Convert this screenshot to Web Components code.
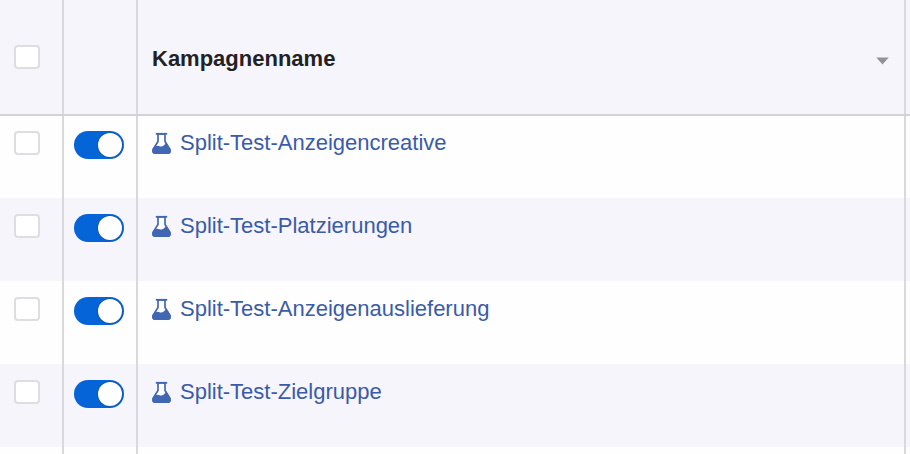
<!DOCTYPE html>
<html lang="de">
<head>
<meta charset="utf-8">
<meta name="viewport" content="width=device-width, initial-scale=1">
<title>Kampagnen</title>
<style>
  html, body { margin: 0; height: 100%; }
  body { background: #fefefe; font-family: "Liberation Sans", Arial, sans-serif; }
</style>
</head>
<body>
<campaign-table></campaign-table>

<script>
class BaseElement extends HTMLElement {
  constructor() {
    super();
    this.attachShadow({ mode: "open" });
  }
  connectedCallback() {
    this.shadowRoot.innerHTML = this.render();
  }
}

class RowCheck extends BaseElement {
  render() {
    return `<style>
      :host { display: block; }
      input {
        appearance: none; display: block; box-sizing: border-box;
        width: 26px; height: 24px; margin: 0 0 0 14px;
        border: 2px solid #dedde2; border-radius: 4px; background: #fff;
      }
      input:checked { background: #0565d8; }
    </style>
    <input type="checkbox" aria-label="${this.getAttribute("label")}">`;
  }
}

class ToggleSwitch extends BaseElement {
  render() {
    return `<style>
      :host { display: block; }
      input {
        appearance: none; display: flex; align-items: center; box-sizing: border-box;
        width: 50px; height: 28px; padding: 0 2px; margin: 0 0 0 10px;
        border-radius: 14px; background: #9a9aa2;
      }
      input::before {
        content: ""; width: 24px; height: 24px; border-radius: 50%;
        background: #fff; box-shadow: 0 0 2px rgba(60, 40, 40, .6);
      }
      input:checked { background: #0565d8; justify-content: flex-end; }
    </style>
    <input type="checkbox" role="switch" checked aria-label="${this.getAttribute("label")}">`;
  }
}

class FlaskIcon extends BaseElement {
  render() {
    return `<style>
      :host { display: block; width: 19px; height: 22px; flex: none; }
      svg { display: block; }
    </style>
    <svg width="19" height="22" viewBox="0 0 19 22" aria-hidden="true">
      <path d="M6 2V9.4L1.2 17Q.2 20.8 2.8 21H16.2Q18.8 20.8 17.8 17L13 9.4V2Z" fill="#fff" stroke="#4267b2" stroke-width="1.7"/>
      <path d="M3.8 1.8H15.2" stroke="#4267b2" stroke-width="1.8" fill="none"/>
      <path d="M2.4 14.4Q5.4 13.2 8.2 14.4Q11.4 15.2 14.2 10.6L18.2 16.8Q19.8 21.6 16.4 22H2.6Q-.8 21.6 .8 16.8Z" fill="#4267b2"/>
    </svg>`;
  }
}

class CampaignName extends BaseElement {
  render() {
    return `<style>
      :host { display: flex; align-items: center; gap: 9px; padding-left: 14px; }
      a { color: #3a5ba9; font-size: 22px; line-height: 24px; text-decoration: none; white-space: nowrap; }
      a:hover { text-decoration: underline; }
    </style>
    <flask-icon></flask-icon><a href="#"><slot></slot></a>`;
  }
}

class ColumnHeading extends BaseElement {
  render() {
    return `<style>
      :host { display: flex; align-items: center; justify-content: space-between; padding: 4px 15px 0 14px; }
      span { color: #222226; font-size: 22px; line-height: 24px; font-weight: bold; }
      button { display: block; border: 0; padding: 4px 0 0; background: none; }
      svg { display: block; }
    </style>
    <span><slot></slot></span>
    <button type="button" aria-label="Spaltenmenü">
      <svg width="13" height="8" viewBox="0 0 13 8" aria-hidden="true"><path d="M.3.5H12.7L6.5 7.5Z" fill="#929297"/></svg>
    </button>`;
  }
}

class CampaignTable extends BaseElement {
  render() {
    const names = [
      "Split-Test-Anzeigencreative",
      "Split-Test-Platzierungen",
      "Split-Test-Anzeigenauslieferung",
      "Split-Test-Zielgruppe"
    ];
    const rows = names.map(name => `
      <tr>
        <td><row-check label="${name} auswählen"></row-check></td>
        <td><toggle-switch label="${name} aktiv"></toggle-switch></td>
        <td><campaign-name>${name}</campaign-name></td>
        <td></td>
      </tr>`).join("");
    return `<style>
      :host { display: block; }
      table { width: 100%; table-layout: fixed; border-collapse: collapse; }
      .check { width: 63px; }
      .state { width: 74px; }
      .rest { width: 5px; }
      th, td { padding: 0; box-sizing: border-box; border-right: 2px solid #d9d8dc; font-weight: normal; text-align: left; }
      th:last-child, td:last-child { border-right: 0; }
      th { height: 115px; border-bottom: 2px solid #d3d2d6; background: #f6f5fb; vertical-align: middle; }
      td { height: 83px; padding-top: 16px; vertical-align: top; }
      tbody tr:first-child td { padding-top: 15px; }
      tbody tr:nth-child(even) { background: #f6f5fb; }
      tfoot td { height: 7px; padding: 0; }
    </style>
    <table>
      <colgroup><col class="check"><col class="state"><col><col class="rest"></colgroup>
      <thead><tr>
        <th><row-check label="Alle auswählen"></row-check></th>
        <th></th>
        <th scope="col"><column-heading>Kampagnenname</column-heading></th>
        <th></th>
      </tr></thead>
      <tbody>${rows}</tbody>
      <tfoot><tr><td></td><td></td><td></td><td></td></tr></tfoot>
    </table>`;
  }
}

customElements.define("row-check", RowCheck);
customElements.define("toggle-switch", ToggleSwitch);
customElements.define("flask-icon", FlaskIcon);
customElements.define("campaign-name", CampaignName);
customElements.define("column-heading", ColumnHeading);
customElements.define("campaign-table", CampaignTable);
</script>
</body>
</html>
